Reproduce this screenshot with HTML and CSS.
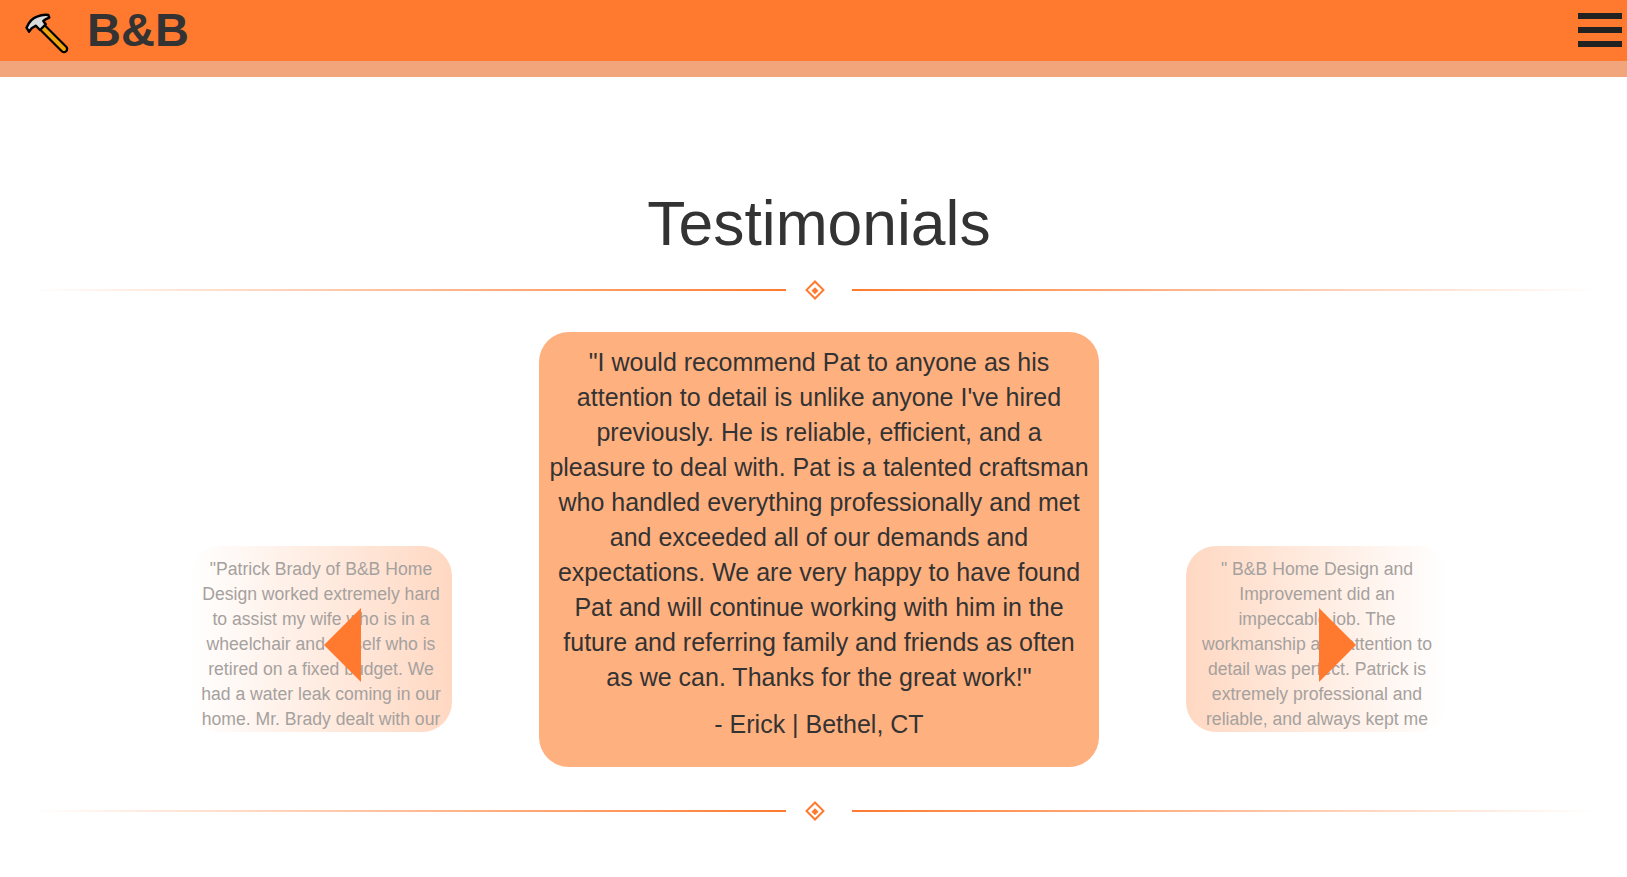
FILE: index.html
```html
<!DOCTYPE html>
<html lang="en">
<head>
    <meta charset="UTF-8">
    <meta name="viewport" content="width=device-width, initial-scale=1.0">
    <title>B&amp;B Testimonials</title>
    <link rel="stylesheet" href="styles.css">
</head>
<body>

<header class="topbar">
    <div class="brand">
        <svg class="brand-icon" viewBox="0 0 44 42" width="44" height="42">
            <path d="M17 14 L39 36" stroke="#000" stroke-width="8.5" stroke-linecap="round"/>
            <path d="M17 14 L39 36" stroke="#f0a30a" stroke-width="4" stroke-linecap="round"/>
            <path d="M4 18.7 L1.5 14.7 C4 9 8 5 12 3.7 C16 2 20 1.5 23.3 2 L24.3 4.7 C22 5.5 20 6.5 18.3 8 L20.7 11.3 L15 17 L10.7 12.7 L6.7 15.3 Z" fill="#d9dbdd" stroke="#000" stroke-width="2.4" stroke-linejoin="round"/>
        </svg>
        <span class="brand-name">B&amp;B</span>
    </div>
    <div class="menu-icon">
        <span></span>
        <span></span>
        <span></span>
    </div>
</header>
<div class="topbar-strip"></div>

<main class="testimonials">
    <h1>Testimonials</h1>

    <div class="divider">
        <div class="rule rule-left"></div>
        <div class="diamond"></div>
        <div class="rule rule-right"></div>
    </div>

    <div class="carousel">
        <div class="side-card side-left">
            <p>"Patrick Brady of B&amp;B Home Design worked extremely hard to assist my wife who is in a wheelchair and myself who is retired on a fixed budget. We had a water leak coming in our home. Mr. Brady dealt with our</p>
            <div class="arrow arrow-left"></div>
        </div>

        <div class="main-card">
            <p>"I would recommend Pat to anyone as his attention to detail is unlike anyone I've hired previously. He is reliable, efficient, and a pleasure to deal with. Pat is a talented craftsman who handled everything professionally and met and exceeded all of our demands and expectations. We are very happy to have found Pat and will continue working with him in the future and referring family and friends as often as we can. Thanks for the great work!"</p>
            <p class="author">- Erick | Bethel, CT</p>
        </div>

        <div class="side-card side-right">
            <p>" B&amp;B Home Design and Improvement did an impeccable job. The workmanship and attention to detail was perfect. Patrick is extremely professional and reliable, and always kept me</p>
            <div class="arrow arrow-right"></div>
        </div>
    </div>

    <div class="divider divider-bottom">
        <div class="rule rule-left"></div>
        <div class="diamond"></div>
        <div class="rule rule-right"></div>
    </div>
</main>

</body>
</html>
```

FILE: styles.css
```css
body {
    font-family: "Liberation Sans", Arial, sans-serif;
    background-color: #fff;
    color: #333;
    margin: 0;
}

.topbar {
    height: 61px;
    background-color: #ff7a2f;
    display: flex;
    justify-content: space-between;
    align-items: center;
}

.topbar-strip {
    height: 16px;
    background-color: #f2a57b;
}

.brand {
    display: flex;
    align-items: center;
    margin-left: 25px;
}

.brand-icon {
    margin-top: 7px;
}

.brand-name {
    font-size: 47px;
    font-weight: bold;
    margin-left: 18px;
    margin-bottom: 2px;
}

.menu-icon {
    width: 44px;
    margin-right: 5px;
    margin-bottom: 1px;
    display: flex;
    flex-direction: column;
    gap: 8px;
}

.menu-icon span {
    height: 6px;
    background-color: #222;
}

.testimonials h1 {
    font-size: 62.4px;
    font-weight: normal;
    text-align: center;
    line-height: 74px;
    margin: 110px 0 0;
    padding-left: 11px;
}

.divider {
    display: flex;
    align-items: center;
    margin: 16px 32px 0;
    height: 26px;
}

.divider-bottom {
    margin-top: 31px;
}

.rule {
    height: 2px;
}

.rule-left {
    width: 754px;
    background: linear-gradient(to right, #fff, #ff7a2f);
}

.rule-right {
    flex: 1;
    background: linear-gradient(to left, #fff, #ff7a2f);
}

.diamond {
    width: 14px;
    height: 14px;
    margin: 0 30.5px 0 21.5px;
    border: 2px solid #ff7a2f;
    box-sizing: border-box;
    transform: rotate(45deg);
    background: linear-gradient(#ff7a2f, #ff7a2f) center / 5px 5px no-repeat #fff;
}

.carousel {
    display: flex;
    justify-content: center;
    align-items: flex-end;
    margin-top: 29px;
    padding-left: 11px;
}

.main-card {
    width: 560px;
    height: 435px;
    box-sizing: border-box;
    background-color: #ffb07f;
    border-radius: 30px;
    padding: 13px 10px 0;
    margin: 0 87px;
    text-align: center;
    font-size: 25px;
    line-height: 35px;
}

.main-card p {
    margin: 0;
}

.main-card .author {
    margin-top: 12px;
}

.side-card {
    width: 262px;
    height: 186px;
    box-sizing: border-box;
    border-radius: 30px;
    padding: 11px 10px 0;
    margin-bottom: 35px;
    text-align: center;
    font-size: 17.6px;
    line-height: 25px;
    color: #a5a19e;
    position: relative;
    overflow: hidden;
}

.side-card p {
    margin: 0;
}

.side-left {
    background: linear-gradient(to right, #fff, #ffd8c2);
}

.side-right {
    background: linear-gradient(to left, #fff, #ffd8c2);
}

.arrow {
    position: absolute;
    top: 62px;
    width: 0;
    height: 0;
    border-top: 37.5px solid transparent;
    border-bottom: 37.5px solid transparent;
}

.arrow-left {
    left: 134px;
    border-right: 37px solid #ff7a2f;
}

.arrow-right {
    left: 133px;
    border-left: 37px solid #ff7a2f;
}
```
